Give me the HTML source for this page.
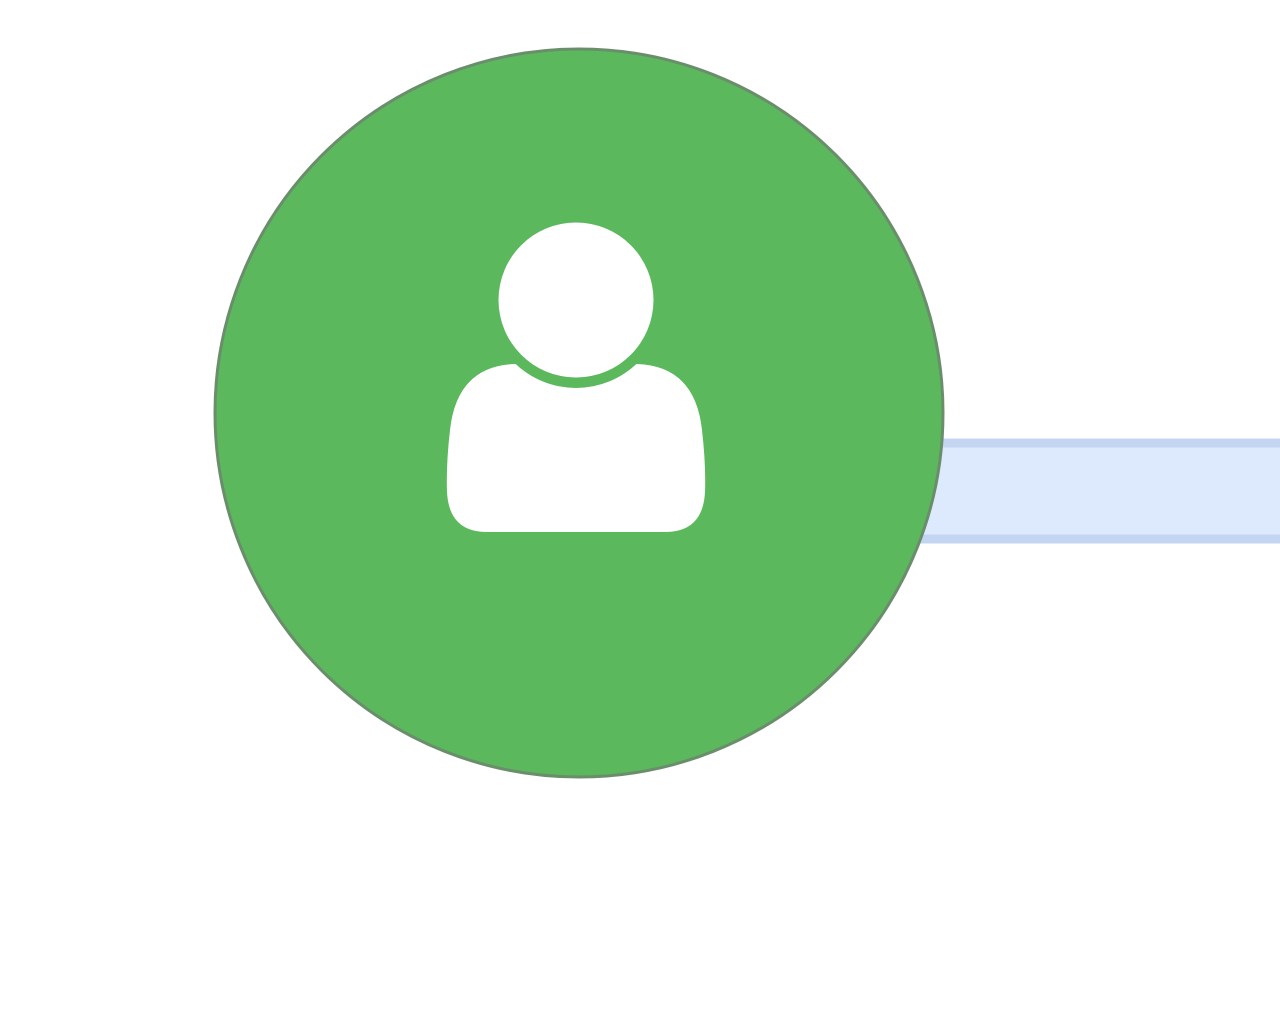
<!DOCTYPE html>
<html><head><style>html,body{margin:0;padding:0;background:#fff;width:1280px;height:1025px;overflow:hidden}</style></head>
<body>
<svg width="1280" height="1025" viewBox="0 0 1280 1025" style="position:absolute;left:0;top:0">
<rect x="880" y="443" width="410" height="96" fill="#dde9fc" stroke="#c4d5f1" stroke-width="9"/>
<circle cx="579" cy="413" r="364" fill="#5cb85c" stroke="#6a8e6c" stroke-width="3"/>
<path d="M515 364 L637 364 Q695 366 702 430 Q706 465 705 492 Q703 532 665 532 L487 532 Q449 532 447 492 Q446 465 450 430 Q457 366 515 364 Z" fill="#fff"/>
<circle cx="576" cy="300" r="88" fill="#5cb85c"/>
<circle cx="576" cy="300" r="77.5" fill="#fff"/>
</svg>
</body></html>
